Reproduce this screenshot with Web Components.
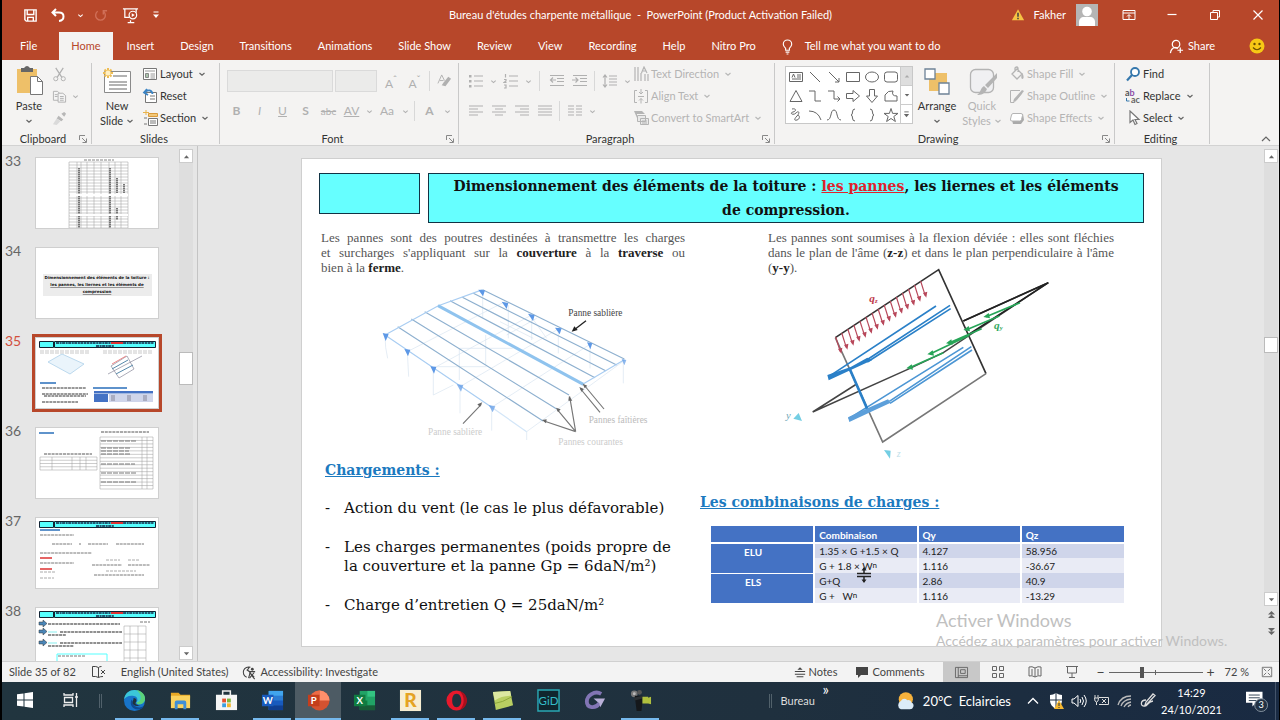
<!DOCTYPE html>
<html lang="en">
<head>
<meta charset="utf-8">
<title>Bureau d'études charpente métallique - PowerPoint</title>
<style>
  html, body { margin: 0; height: 100%; background: #000; }
  body { font: 11px/16px Lato, "Open Sans", sans-serif; color: #333; }
</style>
</head>
<body>
<office-app></office-app>
<script>
const BASE = `
  *{box-sizing:border-box}
  button{font:inherit;color:inherit;background:none;border:0;padding:0;margin:0;display:flex;align-items:center;justify-content:center;white-space:nowrap}
  svg{display:block}
`;

function define(tag, css, html) {
  customElements.define(tag, class extends HTMLElement {
    constructor() { super(); this.attachShadow({ mode: 'open' }); }
    connectedCallback() {
      const body = typeof html === 'function' ? html(this) : html;
      this.shadowRoot.innerHTML = `<style>${BASE}${css}</style>${body}`;
    }
  });
}

/* Each icon: [viewBox width, viewBox height, markup]. Strokes use currentColor. */
const S = 'fill="none" stroke="currentColor"';
const ICONS = {
  save: [16,16,`<path ${S} stroke-width="1.5" d="M2 2h12v12H3.5L2 12.5zM4.5 2v5h7V2M5 14v-4h6v4"/>`],
  undo: [16,16,`<path ${S} stroke-width="2" d="M6 2 2.500 5.500 6 9M3 5.500h6c6 0 6 8 0 8.500"/>`],
  redo: [16,16,`<path ${S} stroke-width="1.500" d="M5 3.500a5.200 5.200 0 1 0 6 0M11 7V3h4"/>`],
  present: [18,18,`<path ${S} stroke-width="1.300" d="M1 2h16M3 2v9h5M15 2v4M9 14v2M6 16.500h7"/><circle cx="11.500" cy="8.500" r="4" ${S} stroke-width="1.300"/><path fill="currentColor" d="m10.300 6.500 3.200 2-3.200 2z"/>`],
  more: [8,8,`<path ${S} d="M1.500 1h5"/><path fill="currentColor" d="M1 3.500h6L4 7z"/>`],
  caret: [8,8,`<path ${S} stroke-width="1.200" d="m1.500 3 2.500 2.200L6.500 3"/>`],
  warn: [16,16,`<path fill="#f6c344" d="M8 1.500 15 14H1z"/><path stroke="#444" stroke-width="1.800" d="M8 5.500v4.500M8 11v1.800"/>`],
  user: [22,22,`<path fill="#b5b5b5" d="M0 0h22v22H0z"/><circle cx="11" cy="7.500" r="4.800" fill="#fff"/><path fill="#fff" d="M3 22v-4c0-3 2-5 5-5h6c3 0 5 2 5 5v4z"/>`],
  ribbonopt: [16,16,`<path ${S} d="M2 3.500h12v9H2zM2 6h12M8 12V8M6 9.500 8 7.500l2 2"/>`],
  min: [16,16,`<path ${S} stroke-width="1.200" d="M3.500 7.500h9"/>`],
  restore: [16,16,`<path ${S} d="M3.500 5.500h7v7h-7zM6 5V3.500h6.500v6.500h-2"/>`],
  close: [16,16,`<path ${S} stroke-width="1.200" d="m3.500 3.500 9 9m0-9-9 9"/>`],
  bulb: [16,18,`<path ${S} stroke-width="1.200" d="M6 13v-2C4.500 9.500 3.500 8.500 3.500 6.500a4.500 4.500 0 0 1 9 0c0 2-1 3-2.500 4.500v2zM6 15h4M7 17h2"/>`],
  share: [16,16,`<circle cx="7.500" cy="5.500" r="4" ${S} stroke-width="1.300"/><path ${S} stroke-width="1.300" d="M1.500 15c.5-3.500 2.500-5.500 5-6l3 1M12 9v6M9 12h6"/>`],
  smile: [16,16,`<circle cx="8" cy="8" r="7.500" fill="#f7c815"/><circle cx="5.500" cy="6" r="1.200" fill="#6b4d00"/><circle cx="10.500" cy="6" r="1.200" fill="#6b4d00"/><path fill="none" stroke="#6b4d00" stroke-width="1.200" d="M4 9.500q4 4.500 8 0"/>`],
  paste: [32,32,`<path fill="#eec069" d="M4 4h20v24H4z"/><path fill="#666" d="M8 7V3h3q3-4 6 0h3v4z"/><path fill="#fff" stroke="#777" d="M17.500 11.500h7l5 5v13h-12z"/><path fill="none" stroke="#777" d="M24.500 11.500v5h5"/>`],
  cut: [16,16,`<path ${S} stroke-width="1.300" d="m4 1 6.500 10M12 1 5.500 11"/><circle cx="4" cy="12.500" r="2.200" ${S}/><circle cx="12" cy="12.500" r="2.200" ${S}/>`],
  copy: [16,16,`<path fill="#f4f4f4" stroke="currentColor" d="M1.500 2.500H6L8.500 5v7h-7zM3 6h3M3 8h3"/><path fill="#f4f4f4" stroke="currentColor" d="M6.500 4.500h5L14.500 7v7h-8zM8.500 8h4M8.500 10h4M8.500 12h4"/>`],
  brush: [16,16,`<path fill="currentColor" d="m10 3 3-2 2 2-2 3zM7 5l5 4-2 2-5-3z" opacity=".9"/><path fill="#dadada" d="m5 8 4 3-4 4-4-1z"/>`],
  launch: [8,8,`<path ${S} d="M.5 5V.5H6M3 3l4 4M7.500 3.500v4h-4"/>`],
  newslide: [32,32,`<path fill="#fff" stroke="#8a8a8a" d="M3.500 6.500h26v21h-26z"/><path stroke="#9a9a9a" stroke-width="1.300" d="M12 11h14M8 17h18M8 20h18M8 24h18"/><path stroke="#eebd55" stroke-width="2" d="M7 3v10M2 8h10M3.500 4.500l7 7M10.500 4.500l-7 7"/><circle cx="7" cy="8" r="2.500" fill="#fff0c4"/>`],
  layout: [16,16,`<path fill="#fff" stroke="#777" d="M1.500 2.500h13v11h-13z"/><path stroke="#999" d="M3 5h10M8.500 8H13M8.500 10H13M8.500 12H13"/><path fill="#aac5ac" stroke="#888" d="M3.500 7.500h3v4h-3z"/>`],
  reset: [16,16,`<path fill="#fff" stroke="#777" d="M3.500 4.500h11v10h-11zM8 8h5M8 11h5"/><path fill="none" stroke="#3b84c4" stroke-width="1.800" d="M5 1 2 4.500 6 7M2.500 4.500C6 1 10 2 10.500 6"/>`],
  section: [16,16,`<path fill="#f2c879" stroke="#d99a3b" d="M6.500 3.500h9v3h-9z"/><path stroke="#e9b34b" d="M1 2.500h6M4 0v5"/><path fill="#fff" stroke="#777" d="M6.500 8.500h9v7h-9zM8 11h6M8 13h6M2 8h3M2 14h3"/>`],
  eraser: [16,16,`<path fill="currentColor" d="m7 9 5-6 3 2-6 8-4-1z"/><path ${S} d="m1 10 4-9 3 6M3 7h4"/>`],
  bullets: [16,16,`<path ${S} stroke-width="1.200" d="M6 3h9M6 8h9M6 13h9"/><path fill="currentColor" d="M1 2h2.500v2.500H1zM1 7h2.500v2.500H1zM1 12h2.500v2.500H1z"/>`],
  numbers: [16,16,`<path ${S} stroke-width="1.200" d="M6 3h9M6 8h9M6 13h9M2.500 1v3.500M1 6.500h2V8L1 9.500h2.500M1 12h2v3H1"/>`],
  outdent: [16,16,`<path ${S} stroke-width="1.200" d="M1 2.500h14M8 5.500h7M8 8.500h7M1 12.500h14M7 7H1.500M4 4.500 1.500 7 4 9.500"/>`],
  indent: [16,16,`<path ${S} stroke-width="1.200" d="M1 2.500h14M8 5.500h7M8 8.500h7M1 12.500h14M0 7h6M3.500 4.500 6 7 3.500 9.500"/>`],
  spacing: [16,16,`<path ${S} stroke-width="1.200" d="M7 3h8M7 6h8M7 9h8M7 12h8M3 2v12M1 4.500 3 2l2 2.500M1 11.500 3 14l2-2.500"/>`],
  left: [16,16,`<path ${S} stroke-width="1.200" d="M1 3h14M1 6h9M1 9h14M1 12h9"/>`],
  center: [16,16,`<path ${S} stroke-width="1.200" d="M1 3h14M4 6h8M1 9h14M4 12h8"/>`],
  right: [16,16,`<path ${S} stroke-width="1.200" d="M1 3h14M6 6h9M1 9h14M6 12h9"/>`],
  justify: [16,16,`<path ${S} stroke-width="1.200" d="M1 3h14M1 6h14M1 9h14M1 12h14"/>`],
  columns: [16,16,`<path ${S} stroke-width="1.200" d="M1 3h6M9 3h6M1 6h6M9 6h6M1 9h6M9 9h6M1 12h6M9 12h6"/>`],
  textdir: [16,16,`<path ${S} stroke-width="1.200" d="M2 1v14M5 1v14M8 7v8M12 8v7M15 8v7M8.500 7 11 1l3 6M10 5h3"/>`],
  aligntext: [16,16,`<path ${S} d="M4 2.500H1.500v12H4M12 2.500h2.500v12H12M5 8.500h6M8 1v5M6 4l2 2 2-2M8 15.500v-5M6 12.500l2-2 2 2"/>`],
  smartart: [16,16,`<path fill="currentColor" d="M1 1h8l3 3H4v4z"/><path fill="#e9e9e9" stroke="currentColor" d="M4.500 5.500h8v6h-8zM7.500 8.500h8v6h-8z"/><path ${S} d="M9 11h5M9 13h5"/>`],
  arrange: [32,32,`<path fill="#eec069" d="M8 8h18v18H8z"/><path fill="#fff" stroke="#6d8297" stroke-width="1.300" d="M4 4h10v10H4zM18 18h10v11H18z"/>`],
  quick: [32,32,`<rect x="4.500" y="4.500" width="23" height="23" rx="5" fill="#f0f0f2" stroke="currentColor" stroke-width="1.300"/><path fill="currentColor" d="M31 8v5l-9 10-3-3zM18 21l3 3c-2 5-6 6-10 6 4-2 3-7 7-9z"/>`],
  fill: [16,16,`<path fill="none" stroke="currentColor" stroke-width="1.300" d="m3 8 5-5 5 5-5 5zM6 5V2q2-2 3 0v4"/><path fill="currentColor" d="M13 7c2 2 2 6 .5 6S12 10 13 7z"/>`],
  outline: [16,16,`<path ${S} d="M11 2.500H1.500v12H5L13 5"/><path fill="currentColor" d="m5 11 8-9 2 1-7 9-4 2z"/>`],
  effects: [16,16,`<path fill="#aaa" d="m3 10 2-4 9-2 1 6-3 4H4z"/><path fill="#fff" stroke="currentColor" d="M4 3.500h8q2 0 1.500 2l-1 4q-.5 1.500-2 1.500H3q-2 0-1.500-2l1-4q.5-1.500 1.500-1.500z"/>`],
  find: [16,16,`<circle cx="10" cy="6" r="4" fill="#fff" stroke="#3678ad" stroke-width="1.800"/><path stroke="#3678ad" stroke-width="2.200" d="M7 9l-5 5.500"/>`],
  replace: [16,16,`<text x="0" y="8" font-size="9" font-family="Lato" font-weight="700" fill="#555">a<tspan fill="#8d4fa8">b</tspan></text><text x="6" y="15" font-size="9" font-family="Lato" font-weight="700" fill="#666">ac</text><path fill="none" stroke="#3678ad" d="M1.500 10v3h3"/>`],
  select: [16,16,`<path fill="#fff" stroke="#777" stroke-width="1.200" d="M5 1v11.500l3-2.500 2 4.500 2-1-2-4h4z"/>`],
  up: [8,8,`<path fill="currentColor" d="M1 6h6L4 2.500z"/>`],
  down: [8,8,`<path fill="currentColor" d="M1 2.500h6L4 6z"/>`],
  uup: [8,10,`<path fill="currentColor" d="M0 5h8L4 1zM0 9h8L4 5z"/>`],
  ddown: [8,10,`<path fill="currentColor" d="M0 1h8L4 5zM0 5h8L4 9z"/>`],
  collapse: [12,8,`<path ${S} stroke-width="1.200" d="m2 6 4-4 4 4"/>`],
  spell: [16,14,`<path ${S} d="M7.500 2.500v10Q5 11 1.500 11.500v-10q3.500-.5 6 1zm0 0q1-1 3-1M7.500 12.500Q9 11.500 12 11.500M10 5l4 4M14 5l-4 4"/>`],
  access: [16,16,`<path ${S} stroke-width="1.200" d="M9 2.500A5.500 5.500 0 1 0 5 13M5 5l3 2h6M9 7l-2 7M9.500 10l4 5M8 2l-2 3"/><circle cx="11" cy="4.500" r="1.500" fill="currentColor"/><path stroke="currentColor" stroke-width="1.200" d="m8 8 5 5m0-5-5 6"/>`],
  notes: [14,14,`<path ${S} stroke-width="1.200" d="M1 6.500h12M1 9.500h12M3 12.500h8"/><path fill="currentColor" d="M4 4.500h6L7 1.500z"/>`],
  comment: [14,14,`<path fill="currentColor" d="M1 2h12v8H6l-3 3v-3H1z"/>`],
  normal: [16,14,`<path ${S} d="M1.500 1.500h13v11h-13zM4.500 1.500v11M7 4h5v4H7zM4.500 10.500h10"/>`],
  sorter: [14,14,`<path ${S} d="M1.500 1.500h4v4h-4zM8.500 1.500h4v4h-4zM1.500 8.500h4v4h-4zM8.500 8.500h4v4h-4z"/>`],
  reading: [14,14,`<path ${S} d="M7 3Q4 1 1 2v9q3-1 6 1zQ10 1 13 2v9q-3-1-6 1M3 5h2M3 7h2M3 9h2M9 5h2M9 7h2M9 9h2"/>`],
  show: [14,14,`<path ${S} d="M1 1.500h12M2.500 2v6h9V2M7 8v4M4 12.500h6"/>`],
  fit: [14,14,`<path ${S} d="M1.500 1.500h11v11h-11zM3 3l3 3M11 3 8 6M3 11l3-3M11 11 8 8"/>`],
  windows: [16,16,`<path fill="#fff" d="m0 2.300 6.500-.9v6.100H0zM7.500 1.200 16 0v7.500H7.500zM0 8.500h6.500v6.100L0 13.700zM7.500 8.500H16V16l-8.500-1.200z"/>`],
  taskview: [16,16,`<path fill="none" stroke="#eee" stroke-width="1.300" d="M1 1v2h9V1M1.500 5.500h8v5h-8zM1 15v-2h9v2M13.500 1v14M12 5h3"/>`],
  edge: [24,24,`<circle cx="12" cy="12" r="11" fill="#1874c9"/><path fill="#3bc6d8" d="M1 11C2 4 7 1 12 1c7 0 11 5 11 9 0 4-3 6-6 6-2 0-3-1-3-2 1-1 1-2 1-3 0-3-3-4-6-4-4 0-7 2-8 4z"/><path fill="#62d46a" d="M14 1c6 1 9 5 9 9 0 4-3 6-6 6-2 0-3-1-3-2 6 0 6-9 0-13z" opacity=".85"/><path fill="#0f4a93" d="M9 11c-3 6 2 12 9 10 2 0 3-2 4-3-6 3-12 0-12-5z"/><path fill="#20323d" d="M11 9.500c2 0 3 1 3 2.500 0 1-1 2-1 3 0 1 3 2 5 2-4 2-8 0-8-3 0-2 1-2 1-4.500z"/>`],
  explorer: [24,24,`<path fill="#e8a925" d="M2 4h8l2 2h10v4H2z"/><path fill="#fbd35e" d="M2 7h20v13H2z"/><path fill="#3f8fd6" d="M6 21v-7q0-2 2-2h8q2 0 2 2v7h-3v-5H9v5z"/>`],
  store: [24,24,`<path fill="none" stroke="#eee" stroke-width="1.600" d="M8 7V2h8v5"/><path fill="#f5f5f5" d="M1 6h22v16H1z"/><path fill="#e5502f" d="M7.500 10h4v4h-4z"/><path fill="#7db53a" d="M12.500 10h4v4h-4z"/><path fill="#3a9ee0" d="M7.500 15h4v4h-4z"/><path fill="#f2b52c" d="M12.500 15h4v4h-4z"/>`],
  word: [24,24,`<path fill="#2b7cd3" d="M8 2h15v20H8z"/><path fill="#41a5ee" d="M8 2h15v5H8z"/><path fill="#185abd" d="M8 12h15v5H8z"/><path fill="#103f91" d="M8 17h15v5H8z"/><path fill="#185abd" d="M1 6h12v12H1z"/><text x="7" y="15.500" font-size="10" font-weight="700" font-family="Lato" text-anchor="middle" fill="#fff">W</text>`],
  ppt: [24,24,`<circle cx="13" cy="12" r="10.500" fill="#d35230"/><path fill="#ff8f6b" d="M13 1.500A10.500 10.500 0 0 1 23.500 12H13z"/><path fill="#ed6c47" d="M13 1.500V12H2.500A10.500 10.500 0 0 1 13 1.500z"/><path fill="#c43e1c" d="M1 6h12v12H1z"/><text x="7" y="15.500" font-size="10" font-weight="700" font-family="Lato" text-anchor="middle" fill="#fff">P</text>`],
  excel: [24,24,`<path fill="#21a366" d="M7 2h16v20H7z"/><path fill="#33c481" d="M15 2h8v6h-8z"/><path fill="#107c41" d="M7 12h8v5H7z"/><path fill="#185c37" d="M7 17h16v5H7z"/><path fill="#107c41" d="M1 6h12v12H1z"/><text x="7" y="15.500" font-size="10" font-weight="700" font-family="Lato" text-anchor="middle" fill="#fff">X</text>`],
  robot: [24,24,`<path fill="#f7edd2" d="M1 1h22v22H1z"/><text x="12" y="19" font-size="20" font-weight="900" font-family="Lato" text-anchor="middle" fill="#e5a323">R</text>`],
  opera: [24,24,`<path fill="#e8192c" fill-rule="evenodd" d="M12 1.500A10.500 10.500 0 1 0 12 22.500 10.500 10.500 0 1 0 12 1.500zm0 3.500c3 0 5 3 5 7s-2 7-5 7-4.500-3-4.500-7 1.500-7 4.500-7z"/><path fill="#a70f1d" d="M15 2c7 2 8 8 8 10s-1 8-8 10c6-5 6-15 0-20z"/>`],
  sticky: [24,24,`<path fill="#b9cf62" d="m2 3 18-1 3 15-18 5z"/><path fill="#dce8a1" d="M2 3l18-1 1 5q-10 0-17 5z"/><path fill="none" stroke="#8ca63a" d="m4 15 8-2 10-5"/>`],
  gid: [24,24,`<path fill="#10262e" stroke="#2aa8b4" stroke-width="1.500" d="M1 1h22v22H1z"/><text x="12" y="17" font-size="12" font-family="Lato" text-anchor="middle" fill="#34bcc8">GiD</text>`],
  gsoft: [24,24,`<path fill="none" stroke="#8275b4" stroke-width="4" d="M19 5C12 1 4 7 4 13c0 7 9 8 13 2"/><path fill="#b9b0d8" d="M11 10h12l-5 9-1-4z"/>`],
  camera: [24,24,`<circle cx="5.500" cy="5" r="3.500" fill="#777"/><circle cx="5.500" cy="5" r="1.500" fill="#bbb"/><circle cx="11" cy="3.500" r="2.500" fill="#555"/><path fill="#15181b" d="M6 7h8v7l-1 9H8z"/><path fill="#2b3033" d="m5 9 9-2v3l-8 2z"/><path fill="#b0c03e" d="M14 8h6v7h-6zM20 9l3-1v8l-3-1z"/>`],
  weather: [24,24,`<circle cx="13" cy="10" r="8.500" fill="#f6b23c"/><path fill="#dcecf8" d="M7 22a5.500 5.500 0 0 1 0-10q3-5 8-1 4-1 5 3 3 1 2 5-1 3-4 3z"/>`],
  chev: [12,12,`<path fill="none" stroke="#fff" stroke-width="1.300" d="m1 8.500 5-5 5 5"/>`],
  shield: [16,16,`<path fill="#fff" d="M8 0q3 2 6 2v5c0 5-3 7-6 9-3-2-6-4-6-9V2q3 0 6-2z"/><path stroke="#1d2d3e" d="M8 0v16M2 7h12"/><path fill="#f4b730" d="m11 7 5 9H6z"/><path stroke="#333" d="M11 10v3M11 14v1"/>`],
  speaker: [16,16,`<path fill="none" stroke="#fff" d="M1 6h2l4-3.500v11L3 10H1zM9 6q1.500 2 0 4M11 4q3 4 0 8M13 2q4.500 6 0 12"/>`],
  battery: [16,16,`<path fill="none" stroke="#ddd" d="M5 4.500h9.500v7H5M1 2v3M4 2v3M.5 5h4q0 4-2 4t-2-4M2.500 9v3M8 6l4 4m0-4-4 4"/>`],
  wifi: [16,16,`<path fill="none" stroke="#bbb" stroke-width="1.300" d="M1 12Q4 3 14 3M4 13q2-6 10-7M7 14q2-4 7-5M11 14q1-2 3-2"/>`],
  pen: [16,16,`<path fill="none" stroke="#ddd" stroke-width="1.300" d="M7 11 5 12l1-3 7-8 2 1.500zM6 7C0 7 0 14 5 13c3 0 2-4 8-5"/>`],
  notif: [26,24,`<path fill="#fff" d="M1 2h18v12h-7l-4 4v-4H1z"/><path stroke="#25384c" d="M4 5.500h12M4 8.500h12M4 11.500h8"/><circle cx="17.500" cy="16.500" r="7" fill="#223244" stroke="#8b98a5"/><text x="17.500" y="20" font-size="10" font-family="Lato" text-anchor="middle" fill="#fff">3</text>`]
};
/* Drawing-gallery shapes on a 16 x 16 field */
const SHAPES = [
  ['Text box','<path d="M1.500 3.500h13v9h-13zM9 6h4M9 8h4M4 10h9M4 8.500 5.500 5 7 8.500"/>'],
  ['Line','<path d="m3 3 10 10"/>'],
  ['Arrow','<path d="m3 3 10 10M13 9v4H9"/>'],
  ['Rectangle','<path d="M1.500 3.500h13v9h-13z"/>'],
  ['Oval','<ellipse cx="8" cy="8" rx="6.500" ry="5"/>'],
  ['Rounded rectangle','<rect x="1.500" y="3" width="13" height="10" rx="2.500"/>'],
  ['Triangle','<path d="M8 2.500 14 13.500H2z"/>'],
  ['Elbow connector','<path d="M2 3h6v10h6"/>'],
  ['Elbow arrow','<path d="M2 3h6v8h6M11.500 8.500 14 11l-2.500 2.500"/>'],
  ['Right arrow','<path d="M1.500 5.500H8v-3L14.500 8 8 13.500v-3H1.500z"/>'],
  ['Down arrow','<path d="M5.500 1.500V8h-3L8 14.500 13.500 8h-3V1.500z"/>'],
  ['Freeform','<path d="M2 13V7q3-5 8-4-2 5 4 5v5z"/>'],
  ['Scribble','<path d="M4 2c4-1 5 2 1 3s0 4 3 1 4 0 1 3-3 5 0 4 3-4 1-5"/>'],
  ['Curve','<path d="M2 4q9 0 12 9"/>'],
  ['S curve','<path d="M1 13C6 13 4 3 8 3s2 10 7 10"/>'],
  ['Left brace','<path d="M10 2Q7.500 2 7.500 5T6 8q1.500 0 1.500 3t2.500 3"/>'],
  ['Right brace','<path d="M6 2q2.500 0 2.500 3T10 8q-1.500 0-1.500 3T6 14"/>'],
  ['Star','<path d="m8 1.500 1.600 4.900H15l-4.200 3.100 1.600 5L8 11.500l-4.400 3 1.600-5L1 6.400h5.400z"/>']
];

define('ui-icon', `:host{display:inline-block;flex:none;line-height:0}`, el => {
  const [w, h, m] = ICONS[el.getAttribute('name')];
  const size = +(el.getAttribute('size') || w);
  return `<svg width="${size}" height="${Math.round(size * h / w)}" viewBox="0 0 ${w} ${h}" aria-hidden="true">${m}</svg>`;
});

define('icon-button', `
  :host{display:block;flex:none}
  button{width:100%;height:100%}
`, el => {
  const icon = el.getAttribute('icon');
  return `<button aria-label="${el.getAttribute('label')}" ${el.hasAttribute('disabled') ? 'disabled' : ''}>${icon ? `<ui-icon name="${icon}" ${el.hasAttribute('size') ? `size="${el.getAttribute('size')}"` : ''}></ui-icon>` : ''}<slot></slot></button>`;
});

define('title-bar', `
  :host{display:grid;grid-template-columns:1fr auto 1fr;align-items:center;height:32px;background:#b7472a;color:#fff;padding-bottom:2px}
  .quick,.win{display:flex;align-items:center}
  .quick{padding-left:14px}
  .quick icon-button{width:28px;height:24px}
  .quick .slim{width:16px}
  .quick .wide{width:36px}
  .quick .dim{width:24px;color:#d06f58}
  .win{justify-content:flex-end}
  .win icon-button{width:43px;height:24px}
  .win ui-icon{margin-right:9px}
  .win .name{margin-right:10px}
`, `
  <div class="quick">
    <icon-button icon="save" size="15" label="Save"></icon-button>
    <icon-button icon="undo" size="16" label="Undo"></icon-button>
    <icon-button class="slim" icon="caret" size="7" label="Undo list"></icon-button>
    <icon-button class="dim" icon="redo" size="15" label="Redo" disabled></icon-button>
    <icon-button class="wide" icon="present" size="17" label="Start from beginning"></icon-button>
    <icon-button class="slim" icon="more" size="8" label="Customize toolbar"></icon-button>
  </div>
  <div>Bureau d'études charpente métallique &nbsp;- &nbsp;PowerPoint (Product Activation Failed)</div>
  <div class="win">
    <ui-icon name="warn" size="14"></ui-icon><span class="name">Fakher</span><ui-icon name="user" size="22"></ui-icon>
    <icon-button icon="ribbonopt" size="16" label="Ribbon display options"></icon-button>
    <icon-button icon="min" label="Minimize"></icon-button>
    <icon-button icon="restore" label="Restore"></icon-button>
    <icon-button icon="close" label="Close"></icon-button>
  </div>
`);

define('ribbon-tabs', `
  :host{display:flex;align-items:stretch;height:28px;background:#b7472a;color:#fff}
  nav{display:flex;gap:2px;padding-left:6px}
  button{padding:0 12px}
  nav button:first-child{margin-right:8px}
  .on{background:#f4f3f2;color:#b7472a}
  .tell{gap:10px;padding:0 12px}
  .share{margin-left:auto;gap:4px;padding:0 12px}
  .mood{padding:0 14px 0 22px}
`, `
  <nav>${['File','Home','Insert','Design','Transitions','Animations','Slide Show','Review','View','Recording','Help','Nitro Pro'].map(t => `<button class="${t === 'Home' ? 'on' : ''}">${t}</button>`).join('')}</nav>
  <button class="tell"><ui-icon name="bulb" size="15"></ui-icon>Tell me what you want to do</button>
  <button class="share"><ui-icon name="share" size="15"></ui-icon>Share</button>
  <button class="mood" aria-label="Feedback"><ui-icon name="smile" size="16"></ui-icon></button>
`);

define('ribbon-group', `
  :host{display:flex;flex-direction:column;flex:none;height:81px;border-right:1px solid #c9c9c9}
  .body{height:70px;display:flex}
  .foot{display:flex;line-height:11px;padding-right:3px}
  .foot span{flex:1;text-align:center}
  .foot button{width:10px;color:#888}
`, el => `<div class="body"><slot></slot></div><div class="foot"><span>${el.getAttribute('label')}</span>${el.hasAttribute('plain') ? '' : `<button aria-label="${el.getAttribute('label')} settings"><ui-icon name="launch" size="8"></ui-icon></button>`}</div>`);

define('ribbon-button', `
  :host{display:block;flex:none}
  button{height:22px;gap:2px;color:#333}
  .caret{width:8px;margin-left:3px;color:#666;display:inline-flex}
  button:disabled{color:#b4b4b4}
  button:disabled .caret{color:#b9b9b9}
  :host([big]) button{width:100%;height:66px;flex-direction:column;justify-content:flex-start;gap:1px;line-height:15px;padding-top:2px}
  :host([big]) .caret{display:inline-block;margin:0}
  :host([big]) .lab{white-space:pre-line;text-align:center}
`, el => {
  const caret = el.hasAttribute('caret') ? `<span class="caret"><ui-icon name="caret" size="8"></ui-icon></span>` : '';
  const big = el.hasAttribute('big');
  return `<button ${el.hasAttribute('disabled') ? 'disabled' : ''}><ui-icon name="${el.getAttribute('icon')}" size="${big ? 32 : 16}"></ui-icon>${big ? `<span class="lab"><slot></slot> ${caret}</span>` : `<span><slot></slot></span>${caret}`}</button>`;
});

define('shape-gallery', `
  :host{display:flex;width:128px;height:58px;margin-top:3px;background:#fff;border:1px solid #c8c8c8}
  .grid{display:grid;grid-template-columns:repeat(6,19px);grid-auto-rows:19px;flex:1}
  .grid button{color:#666}
  .bar{display:flex;flex-direction:column;width:12px;border-left:1px solid #ccc;color:#666}
  .bar button{flex:1}
  .bar button:first-child{background:#dedede;color:#aaa}
  .bar button+button{border-top:1px solid #ccc}
`, `
  <div class="grid">${SHAPES.map(([n, p]) => `<button aria-label="${n}"><svg width="16" height="16" viewBox="0 0 16 16" fill="none" stroke="currentColor">${p}</svg></button>`).join('')}</div>
  <div class="bar"><button aria-label="Previous shapes"><ui-icon name="up" size="6"></ui-icon></button><button aria-label="Next shapes"><ui-icon name="down" size="6"></ui-icon></button><button aria-label="More shapes"><ui-icon name="more" size="7"></ui-icon></button></div>
`);

define('office-ribbon', `
  :host{display:flex;height:86px;background:#f4f3f2;border-bottom:1px solid #d2d2d2;padding-top:3px}
  .col{display:flex;flex-direction:column}
  .row{display:flex;align-items:center;height:30px}
  .off{color:#b0b0b0}
  .clip{width:90px;padding-left:6px}
  .slides{width:128px}
  .font{width:239px}
  .para{width:316px}
  .draw{width:340px}
  .edit{width:95px}
  .tiny{width:32px}
  .tiny icon-button{height:22px;width:18px}
  .tiny div{display:flex}
  .tiny .c{width:14px}
  .fontbox{padding:3px 0 0 7px}
  select{appearance:none;height:22px;border:1px solid #d0d0d0;background:#e8e8e7;margin:0 2px 0 0;border-radius:0}
  .fam{width:106px}.siz{width:42px}
  .fontbox icon-button,.pbox icon-button{width:23px;height:24px}
  .fontbox .row:last-child{margin-left:-2px}
  .fontbox .c,.pbox .c{width:12px}
  .fontbox .w{width:24px}
  i.sep{width:1px;height:20px;background:#d8d8d8;margin:0 5px}
  i.sep.s{margin:0 3px}
  .pbox{padding:3px 0 0 5px;width:174px}
  .quick{width:42px}.arr{width:48px}.big{width:50px}.pst{width:42px}
  .fx{padding-left:6px}
  .edit .col{padding-left:10px}
  shape-gallery{margin-left:10px}
  .collapse{margin-left:auto;display:flex;align-items:flex-end;padding:0 7px 2px 0;color:#666}
  b,em,u,s,span{font-size:12px}
  s{font-size:10px}
`, `
  <ribbon-group class="clip" label="Clipboard">
    <ribbon-button class="pst" big icon="paste" caret>Paste
</ribbon-button>
    <div class="col tiny off">
      <div><icon-button icon="cut" size="15" label="Cut" disabled></icon-button></div>
      <div><icon-button icon="copy" size="15" label="Copy" disabled></icon-button><icon-button class="c" icon="caret" size="7" label="Copy options" disabled></icon-button></div>
      <div><icon-button icon="brush" size="15" label="Format painter" disabled></icon-button></div>
    </div>
  </ribbon-group>
  <ribbon-group class="slides" label="Slides" plain>
    <ribbon-button class="big" big icon="newslide" caret>New
Slide</ribbon-button>
    <div class="col"><ribbon-button icon="layout" caret>Layout</ribbon-button><ribbon-button icon="reset">Reset</ribbon-button><ribbon-button icon="section" caret>Section</ribbon-button></div>
  </ribbon-group>
  <ribbon-group class="font" label="Font">
    <div class="col fontbox off">
      <div class="row"><select class="fam" aria-label="Font name" disabled></select><select class="siz" aria-label="Font size" disabled></select>
        <icon-button label="Increase font size" class="w" disabled><span>A<sup>ˆ</sup></span></icon-button><icon-button label="Decrease font size" disabled><span>A<sup>ˇ</sup></span></icon-button><i class="sep s"></i><icon-button icon="eraser" size="15" label="Clear formatting" disabled></icon-button></div>
      <div class="row"><icon-button label="Bold" disabled><b>B</b></icon-button><icon-button label="Italic" disabled><em>I</em></icon-button><icon-button label="Underline" disabled><u>U</u></icon-button><icon-button label="Shadow" disabled><b>S</b></icon-button><icon-button label="Strikethrough" disabled><s>abc</s></icon-button><icon-button label="Character spacing" disabled><u>AV</u></icon-button><icon-button class="c" icon="caret" size="7" label="Spacing options" disabled></icon-button><icon-button class="w" label="Change case" disabled><span>Aa</span></icon-button><icon-button class="c" icon="caret" size="7" label="Case options" disabled></icon-button><i class="sep s"></i><icon-button label="Font color" disabled><b>A</b></icon-button><icon-button class="c" icon="caret" size="7" label="Font color options" disabled></icon-button></div>
    </div>
  </ribbon-group>
  <ribbon-group class="para" label="Paragraph">
    <div class="col pbox off">
      <div class="row"><icon-button icon="bullets" label="Bullets" disabled></icon-button><icon-button class="c" icon="caret" size="7" label="Bullet options" disabled></icon-button><icon-button icon="numbers" label="Numbering" disabled></icon-button><icon-button class="c" icon="caret" size="7" label="Numbering options" disabled></icon-button><i class="sep"></i><icon-button icon="outdent" label="Decrease indent" disabled></icon-button><icon-button icon="indent" label="Increase indent" disabled></icon-button><i class="sep s"></i><icon-button icon="spacing" label="Line spacing" disabled></icon-button><icon-button class="c" icon="caret" size="7" label="Line spacing options" disabled></icon-button></div>
      <div class="row"><icon-button icon="left" label="Align left" disabled></icon-button><icon-button icon="center" label="Center" disabled></icon-button><icon-button icon="right" label="Align right" disabled></icon-button><icon-button icon="justify" label="Justify" disabled></icon-button><i class="sep s"></i><icon-button icon="columns" label="Columns" disabled></icon-button><icon-button class="c" icon="caret" size="7" label="Column options" disabled></icon-button></div>
    </div>
    <div class="col"><ribbon-button icon="textdir" caret disabled>Text Direction</ribbon-button><ribbon-button icon="aligntext" caret disabled>Align Text</ribbon-button><ribbon-button icon="smartart" caret disabled>Convert to SmartArt</ribbon-button></div>
  </ribbon-group>
  <ribbon-group class="draw" label="Drawing">
    <shape-gallery></shape-gallery>
    <ribbon-button class="arr" big icon="arrange" caret>Arrange
</ribbon-button>
    <ribbon-button class="quick" big icon="quick" caret disabled>Quick
Styles</ribbon-button>
    <div class="col fx"><ribbon-button icon="fill" caret disabled>Shape Fill</ribbon-button><ribbon-button icon="outline" caret disabled>Shape Outline</ribbon-button><ribbon-button icon="effects" caret disabled>Shape Effects</ribbon-button></div>
  </ribbon-group>
  <ribbon-group class="edit" label="Editing" plain>
    <div class="col"><ribbon-button icon="find">Find</ribbon-button><ribbon-button icon="replace" caret>Replace</ribbon-button><ribbon-button icon="select" caret>Select</ribbon-button></div>
  </ribbon-group>
  <div class="collapse"><button aria-label="Collapse the ribbon"><ui-icon name="collapse" size="12"></ui-icon></button></div>
`);

/* Miniature drawings shown in the thumbnail list, on a 122 x 70 field */
const HEAD = `<path fill="#5ff" stroke="#123" d="M3.500 3.500h14v6h-14zM18.500 3.500h101v6h-101z"/><path stroke="#124" stroke-width="1.500" stroke-dasharray="3 .6 2 .5" d="M20 5h98M60 8h18"/><path stroke="#d33" stroke-width="2" d="M75 5h12"/>`;
const grid = (x, y, w, h, cols, rows) => {
  let d = `M${x} ${y}h${w}v${h}h-${w}z`;
  cols.forEach(c => d += `M${x + c} ${y}v${h}`);
  for (let r = 1; r < rows; r++) d += `M${x} ${y + r * h / rows}h${w}`;
  return `<path fill="none" stroke="#999" stroke-width=".5" d="${d}"/>`;
};
const THUMBS = {
  33: `<path stroke="#666" stroke-width=".8" stroke-dasharray="3 1" d="M48 2h30"/>${grid(33,4,59,66,[8,12,18,25,32,40,46,52],22)}<path stroke="#777" stroke-width="2" stroke-dasharray="1.500 .5" d="M43 10v60M74 10v60"/><path stroke="#777" stroke-width="2" stroke-dasharray="1.500 .5" d="M81 20v15M81 50v12M88 26v9"/><path stroke="#fff" stroke-width="2" d="M34 37h58M34 57h58"/>`,
  34: `<path fill="#ececec" d="M7 26h109v22H7z"/><g font-family="DejaVu Sans" font-weight="700" font-size="4" text-anchor="middle" fill="#111"><text x="61" y="31">Dimensionnement des éléments de la toiture :</text><text x="61" y="38" text-decoration="underline">les pannes, les liernes et les éléments de</text><text x="61" y="45" text-decoration="underline">compression</text></g>`,
  35: `${HEAD}<path stroke="#bbb" stroke-width=".8" stroke-dasharray="4 1" d="M4 13h50M4 15h50M67 13h49M67 15h49"/><path stroke="#bcd9ee" fill="#eaf4fb" d="m12 24 14-8 22 10-14 10z"/><path stroke="#889" fill="none" stroke-width=".7" d="m75 28 16-10 7 13-15 9zM72 36l34-18"/><path stroke="#58a" stroke-width="1" d="m76 31 16-9M80 36l17-9"/><path stroke="#e88" d="m76 26 14-8"/><path stroke="#2a6fba" stroke-width="1.300" d="M4 45h16M57 50h34"/><path stroke="#333" stroke-dasharray="3 .7" d="M6 50h44M6 56h46M8 58h42M6 64h36"/><path fill="#4472c4" d="M58 53h59v2.500H58zM58 56h14v8H58z"/><path fill="#cfd5ea" d="M73 56h44v8H73z"/><path stroke="#667" stroke-width=".7" stroke-dasharray="4 12" d="M75 58h42M75 60h42M75 62h42"/>`,
  36: `<path stroke="#2a6fba" stroke-width="1.500" d="M3 5h15"/><path stroke="#555" stroke-dasharray="3 .8" d="M8 26h48M65 4h48"/>${grid(4,29,57,13,[12,32,40,46],4)}${grid(64,9,53,52,[42,47],15)}<path stroke="#777" stroke-dasharray="5 1" d="M65 13h36M65 20h30M65 23h28M65 26h30M65 36h34M65 45h35M65 54h36"/>`,
  37: `${HEAD}<path stroke="#2a6fba" stroke-width="1.500" d="M4 12h20"/><path stroke="#555" stroke-width=".8" stroke-dasharray="3 .7" d="M4 17h34M4 35h52M16 26h20M43 26h2M52 26h20M80 26h28M4 45h34M56 47h30M92 47h22M58 57h50"/><path stroke="#d33" stroke-width="1.500" d="M4 40h12M4 51h12"/><path stroke="#aaa" stroke-dasharray="3 1" d="M70 42h14M92 42h12M4 60h14M70 53h30M4 54h16"/>`,
  38: `${HEAD}<path fill="#4a86b8" stroke="#333" stroke-width=".5" d="M3 14h4v-2l4 3.500-4 3.500v-2H3zM3 22h4v-2l4 3.500-4 3.500v-2H3zM3 33h4v-2l4 3.500-4 3.500v-2H3z"/><path stroke="#222" stroke-width="1.200" stroke-dasharray="3 .7" d="M12 16h72M24 24h62M12 27h18M24 35h62M12 38h26"/><path stroke="#8ee" stroke-width="1.200" d="M12 24h9M12 35h9"/><path fill="#fff" stroke="#5ff" d="M21 46h50v24H21z"/><path stroke="#777" stroke-dasharray="3 1" d="M22 48h28M104 14h10"/>${grid(88,18,22,40,[6,14],5)}`
};

define('slide-thumb', `
  :host{display:flex;gap:14px;height:90px;flex:none;font-size:14px;color:#666}
  .n{width:16px;line-height:16px}
  button{width:124px;height:72px;margin-top:4px;background:#fff;border:1px solid #cfcfcf}
  :host([current]){color:#d24f3c}
  :host([current]) button{outline:3px solid #b7472a}
`, el => {
  const n = el.getAttribute('number');
  return `<span class="n">${n}</span><button aria-label="Slide ${n}"><svg width="122" height="70" viewBox="0 0 122 70" fill="none">${THUMBS[n]}</svg></button>`;
});

define('scroll-bar', `
  :host{display:flex;flex-direction:column;width:14px;background:#dedede;color:#666}
  button{width:14px;height:14px;background:#fff;border:1px solid #ccc;flex:none}
  .above,.below{flex:1 1 0}
  .thumb{background:#fff;border:1px solid #bbb;flex:none}
  .pages{display:flex;flex-direction:column;flex:none;background:#e6e6e6}
  .pages button{background:none;border:0;height:17px}
`, el => `
  <button aria-label="Scroll up"><ui-icon name="up" size="7"></ui-icon></button>
  <div class="above" style="flex-grow:${el.getAttribute('before')}"></div><div class="thumb" style="height:${el.getAttribute('thumb')}px"></div><div class="below" style="flex-grow:${el.getAttribute('after')}"></div>
  <button aria-label="Scroll down"><ui-icon name="down" size="7"></ui-icon></button>
  ${el.hasAttribute('pages') ? '<div class="pages"><button aria-label="Previous slide"><ui-icon name="uup" size="7"></ui-icon></button><button aria-label="Next slide"><ui-icon name="ddown" size="7"></ui-icon></button></div>' : ''}
`);

define('thumb-pane', `
  :host{display:flex;width:196px;flex:none;min-height:0;background:#e6e6e6;border-right:1px solid #c4c4c4}
  .list{flex:1;min-height:0;overflow:hidden;padding:7px 0 0 3px;display:flex;flex-direction:column}
  scroll-bar{margin:3px 4px 1px 0}
`, `
  <div class="list">${[33,34,35,36,37,38].map(n => `<slide-thumb number="${n}" ${n === 35 ? 'current' : ''}></slide-thumb>`).join('')}</div>
  <scroll-bar before="190" thumb="33" after="262"></scroll-bar>
`);

/* Roof frame: purlins, rafters and columns */
define('roof-diagram', `:host{display:block;width:300px}svg{width:100%;height:auto}`, `
<svg viewBox="240 360 900 540" fill="none" role="img" aria-label="Panne sablière">
  <g stroke="#d8e4f0" stroke-width="2">
    <path d="M322 590 615 440M400 640 695 480M480 695 775 522M575 757 870 568M680 830 975 615"/>
    <path d="M255 540q0 40 8 70M322 590l4 75M400 640v80M480 695v80M575 757v70M680 830v25M548 410v80M625 450v100M695 485v70M775 525v70M870 570v70M970 620v65M478 580v95M557 540v90M478 580h160M400 635h160M600 500l100 50M690 480l50 70M620 540l90-50M400 720l60-30"/>
  </g>
  <g stroke="#8eb0cf" stroke-width="3.500">
    <path d="m548 404 425 208M520 415l430 215M487 427l430 220M450 437l435 231M374 470l433 250M334 492l436 270M293 515l436 283"/>
    <path stroke="#a9cdf2" d="m255 540 320 217M255 540l160-88 133-48M848 688l125-74"/>
    <path stroke="#d3e6f8" d="m575 757 105 73"/>
  </g>
  <path stroke="#8fc3ee" stroke-width="9" d="m414 452 436 236"/>
  <g fill="#5d98e6"><path d="m535 404 20 2-6 18zM605 440l20 4-5 18zM684 476l20 4-5 18zM765 518l20 2-6 18zM861 562l16 3-6 18zM248 534l18 4-9 20zM313 582l18 2-7 20zM391 634l18 2-7 20z"/><path opacity=".7" d="m470 688 20 2-7 20zM566 750l20 4-8 18zM965 612l14 3-6 16z"/></g>
  <g stroke="#777" stroke-width="3.500"><path d="m489 806 55-58M827 830l-18-105M827 830l-55-66M827 830l-95-32M900 772l-58-70M912 762l-60-72"/></g>
  <g fill="#666"><path d="m547 742-7 14-8-8zM807 722l10 15h-12zM768 758l14 5-8 9zM726 795l14-2-2 12zM838 696l14 6-8 8zM848 686l14 6-8 8z"/></g>
  <path stroke="#222" stroke-width="4" d="m858 497-36 28"/><path fill="#222" d="m815 530 8-16 10 11z"/>
  <g font-family="Liberation Serif" font-size="28"><text x="805" y="484" fill="#444">Panne sablière</text><text x="384" y="841" fill="#ccc">Panne sablière</text><text x="866" y="803" fill="#bbb">Pannes faîtières</text><text x="775" y="869" fill="#ccc">Pannes courantes</text></g>
</svg>`);

/* Loads q z and q y on an inclined purlin */
const ARROWS = Array.from({ length: 15 }, (_, i) => {
  const x = 317 + i * 18.2, y = 543 - i * 12;
  return `<path d="m${x} ${y} 14 44"/><path fill="#b8475a" stroke="none" d="m${x + 17} ${y + 50}-10-14 13-4z"/>`;
}).join('');
define('load-diagram', `:host{display:block;width:300px}svg{width:100%;height:auto}`, `
<svg viewBox="108 333 900 600" fill="none" role="img" aria-label="Charges qz et qy">
  <path stroke="#333" stroke-width="5" d="m316 545 310-204 142 312"/>
  <path stroke="#777" stroke-width="5" d="M768 653 458 858 316 545"/>
  <path stroke="#444" stroke-width="4.500" d="M248 768 540 637 640 590 955 380 700 495M248 768l132-84"/>
  <path stroke="#222" stroke-width="5" d="M715 536 955 380 700 495"/>
  <g stroke="#b8475a" stroke-width="3.500">${ARROWS}</g>
  <g stroke="#2a80c8" stroke-width="5"><path d="m296 662 322-212M410 612l250-164M412 618l250-160"/><path stroke="#4c96d4" d="m356 788 344-214M478 736l246-164M480 742l246-160"/><path stroke-width="8" d="m358 636 56 128"/></g>
  <path fill="#2a80c8" d="m292 657 70-24 50-28 14 8-62 28-68 32z"/><path fill="#5c9fda" d="m354 784 60-28 60-26 8 10-60 28-64 30z"/>
  <g stroke="#27a558" stroke-width="5"><path d="M870 440 768 482M808 480l-100 42M755 518l-100 44M718 538l-118 56M640 590l-103 46"/></g>
  <g fill="#27a558"><path d="m760 483 16-12 4 16zM700 522l16-12 4 16zM648 562l16-12 4 16zM592 595l16-12 4 16zM529 637l16-12 4 16z"/></g>
  <path fill="#51c2dc" d="m190 788 16-17 10 24zM462 882l20 2-2 24z" opacity=".8"/>
  <g font-family="Liberation Serif" font-style="italic" font-weight="700"><text x="418" y="437" font-size="34" fill="#c0394b">q<tspan font-size="20" dy="5">z</tspan></text><text x="792" y="518" font-size="34" fill="#35a862">q<tspan font-size="20" dy="5">y</tspan></text><text x="168" y="788" font-size="32" font-weight="400" fill="#6fa8b8">y</text><text x="500" y="904" font-size="30" font-weight="400" fill="#bfe0ea">z</text></g>
</svg>`);

define('load-table', `
  :host{display:block}
  table{border-collapse:collapse;width:100%;table-layout:fixed;font:10px/14px Lato,sans-serif;color:#222;background:#fff}
  th,td{text-align:left;padding:0 4px;height:15px;border:0;border-right:2px solid #fff;white-space:pre}
  tr>:last-child{border-right:0}
  thead th{background:#4472c4;color:#fff;border-bottom:2px solid #fff;padding-top:2px}
  tbody th{background:#4472c4;color:#fff;text-align:center;vertical-align:top;padding-right:22px;padding-top:1px}
  tbody tr:nth-child(odd) td{background:#cfd5ea}
  tbody tr:nth-child(even) td{background:#e9ebf5}
  tbody tr:nth-child(3) th{border-top:1px solid #fff}
  small{font-size:8px;line-height:8px;vertical-align:2px}
`, `
<table>
  <thead><tr><th scope="col"></th><th scope="col">Combinaison</th><th scope="col">Qy</th><th scope="col">Qz</th></tr></thead>
  <tbody>
    <tr><th scope="rowgroup" rowspan="2">ELU</th><td>1.35 × G +1.5 × Q</td><td>4.127</td><td>58.956</td></tr>
    <tr><td>G + 1.8 × W<small>n</small></td><td>1.116</td><td>-36.67</td></tr>
    <tr><th scope="rowgroup" rowspan="2">ELS</th><td>G+Q</td><td>2.86</td><td>40.9</td></tr>
    <tr><td>G +   W<small>n</small></td><td>1.116</td><td>-13.29</td></tr>
  </tbody>
</table>`);

define('slide-canvas', `
  :host{display:block;position:relative;background:#fff;border:1px solid #cfcfcf;aspect-ratio:860/488;padding:14px 17px;font-family:"DejaVu Serif",serif;color:#111}
  header{display:flex;align-items:flex-start;gap:8px}
  .tag{width:101px;height:41px;background:#6ff;border:1px solid #134}
  h1{flex:1;margin:0;background:#6ff;border:1px solid #134;font-size:14px;line-height:24px;font-weight:700;text-align:center}
  h1 u{color:#e0222c}
  .cols{display:grid;grid-template-columns:381px 1fr;margin-top:7px}
  p{font:13px/15px "Liberation Serif",serif;text-align:justify;margin:0;color:#555}
  p span{display:block;text-align-last:justify}
  p b{color:#222}
  .left p{width:364px;margin-left:2px}
  .right p{width:346px;margin-left:68px}
  roof-diagram{margin-left:61px}
  load-diagram{margin:-8px 0 0 66px}
  h2{margin:0;font-size:14px;line-height:20px;color:#1c7abf;text-decoration:underline}
  .left h2{margin:5px 0 0 6px}
  .right h2{margin-top:25px}
  ul{list-style:none;margin:19px 0 0 6px;padding:0;font-size:15px;line-height:19px;display:grid;gap:20px;white-space:nowrap}
  li{display:flex;gap:14px}
  load-table{margin:14px 20px 0 11px}
  .pointer{position:absolute;left:554px;top:408px}
`, `
  <header><div class="tag"></div><h1>Dimensionnement des éléments de la toiture : <u>les pannes</u>, les liernes et les éléments<br>de compression.</h1></header>
  <div class="cols">
    <section class="left">
      <p><span>Les pannes sont des poutres destinées à transmettre les charges</span><span>et surcharges s'appliquant sur la <b>couverture</b> à la <b>traverse</b> ou</span>bien à la <b>ferme</b>.</p>
      <roof-diagram></roof-diagram>
      <h2>Chargements :</h2>
      <ul><li><span>-</span><span>Action du vent (le cas le plus défavorable)</span></li><li><span>-</span><span>Les charges permanentes (poids propre de<br>la couverture et la panne Gp = 6daN/m²)</span></li><li><span>-</span><span>Charge d’entretien Q = 25daN/m²</span></li></ul>
    </section>
    <section class="right">
      <p>Les pannes sont soumises à la flexion déviée : elles sont fléchies dans le plan de l'âme (<b>z-z</b>) et dans le plan perpendiculaire à l'âme (<b>y-y</b>).</p>
      <load-diagram></load-diagram>
      <h2>Les combinaisons de charges :</h2>
      <load-table></load-table>
    </section>
  </div>
  <svg class="pointer" width="16" height="16" viewBox="0 0 16 16"><path stroke="#222" stroke-width="1.500" d="M1 6.500h14M1 9.500h14M8 1v5M8 10v5"/><path fill="#222" d="M5.500 3.500h5L8 0zM5.500 12.500h5L8 16z"/></svg>
`);

define('work-area', `
  :host{display:flex;flex:1;min-width:0;min-height:0;background:#e6e6e6;position:relative}
  .stage{flex:1;min-width:0;padding:12px 102px 0 103px;overflow:hidden}
  scroll-bar{margin:3px 1px 21px 0}
  .mark{position:absolute;right:49px;bottom:10px;width:294px;color:#c0c0c0;font-size:14px;line-height:20px;white-space:nowrap}
  .mark strong{display:block;font-weight:400;font-size:18px;line-height:22px}
`, `
  <div class="stage"><slide-canvas></slide-canvas></div>
  <scroll-bar before="174" thumb="16" after="240" pages></scroll-bar>
  <div class="mark"><strong>Activer Windows</strong>Accédez aux paramètres pour activer Windows.</div>
`);

define('status-bar', `
  :host{display:flex;align-items:center;height:21px;flex:none;background:#f3f3f3;border-top:1px solid #d0d0d0;padding:0 4px 0 7px;color:#444}
  button{height:20px;gap:3px}
  .sp{margin:0 14px 0 15px}
  .acc{margin-left:14px}
  .end{margin-left:auto;display:flex;align-items:center}
  .end .cm{margin:0 18px}
  .end icon-button{width:37px;height:20px;color:#666}
  .end .on{background:#c8c8c8}
  .end .z{width:16px;font-size:14px}
  input{appearance:none;width:94px;height:20px;margin:0;background:linear-gradient(#666,#666) center/100% 1px no-repeat,linear-gradient(#666,#666) center/1px 5px no-repeat}
  input::-webkit-slider-thumb{appearance:none;width:4px;height:11px;background:#555}
  .views{display:flex;margin-right:2px}
  .pct{margin:0 2px 0 6px}
  .end .fit{width:24px;margin-left:4px;margin-right:-4px}
`, `
  <span>Slide 35 of 82</span>
  <icon-button class="sp" icon="spell" size="16" label="Spelling"></icon-button>
  <button>English (United States)</button>
  <button class="acc"><ui-icon name="access" size="15"></ui-icon>Accessibility: Investigate</button>
  <div class="end">
    <button><ui-icon name="notes" size="12"></ui-icon>Notes</button>
    <button class="cm"><ui-icon name="comment" size="14"></ui-icon>Comments</button>
    <div class="views"><icon-button class="on" icon="normal" size="15" label="Normal view"></icon-button>
    <icon-button icon="sorter" label="Slide sorter"></icon-button>
    <icon-button icon="reading" label="Reading view"></icon-button>
    <icon-button icon="show" label="Slide show"></icon-button></div>
    <button class="z">−</button><input type="range" min="10" max="178" value="68" aria-label="Zoom"><button class="z">+</button>
    <span class="pct">72 %</span>
    <icon-button class="fit" icon="fit" size="12" label="Fit slide"></icon-button>
  </div>
`);

define('task-item', `
  :host{display:block;width:46px;height:38px;flex:none}
  button{width:100%;height:100%;border-bottom:2px solid transparent}
  :host([open]){padding:0 4px}
  :host([open]) button{border-color:#76b9ed}
  :host([active]){padding:0}
  :host([active]) button{background:#4d5b64}
`, el => `<button aria-label="${el.getAttribute('label')}"><ui-icon name="${el.getAttribute('icon')}" size="${el.getAttribute('size') || 23}"></ui-icon></button>`);

define('task-bar', `
  :host{display:flex;align-items:center;height:38px;flex:none;background:linear-gradient(90deg,#21353f,#1f303e 60%,#192a42);color:#fff}
  i{width:3px;height:14px;border:solid #51616b;border-width:0 1px;margin:0 9px 0 5px}
  .tray{margin-left:auto;display:flex;align-items:center}
  .desk{position:relative;margin-right:80px;color:#ddd}
  .desk span{position:absolute;left:42px;top:-12px;font-size:15px;color:#fff}
  .w{font-size:13px;gap:8px}
  .clock{flex-direction:column;line-height:17px;margin:0 22px 0 2px}
  .tray .ic{width:23px;height:30px}
  .tray .first{margin-left:10px}
  .tray .n{width:26px;height:30px}
  .edge{width:1px;height:38px;background:#44546a;margin:0 3px 0 5px}
`, `
  <task-item icon="windows" label="Start" size="16"></task-item>
  <task-item icon="taskview" label="Task view" size="16"></task-item>
  <i></i>
  ${[['edge','Edge',1],['explorer','File Explorer',1],['store','Store',0],['word','Word',1],['ppt','PowerPoint',2],['excel','Excel',0],['robot','Robot',1],['opera','Opera',1],['sticky','Notes',1],['gid','GiD',0],['gsoft','Graph',0],['camera','Recorder',1]].map(([ic, l, o]) => `<task-item icon="${ic}" label="${l}" ${o ? 'open' : ''} ${o === 2 ? 'active' : ''}></task-item>`).join('')}
  <div class="tray">
    <i></i>
    <button class="desk">Bureau<span>»</span></button>
    <button class="w"><ui-icon name="weather" size="20"></ui-icon>20°C &nbsp;Eclaircies</button>
    <icon-button class="ic first" icon="chev" size="12" label="Hidden icons"></icon-button>
    ${['shield','speaker','battery','wifi','pen'].map(n => `<icon-button class="ic" icon="${n}" size="16" label="${n}"></icon-button>`).join('')}
    <button class="clock"><span>14:29</span><span>24/10/2021</span></button>
    <icon-button class="n" icon="notif" size="24" label="Notifications"></icon-button>
    <div class="edge"></div>
  </div>
`);

define('office-app', `
  :host{box-sizing:border-box;display:flex;flex-direction:column;height:100vh;border:solid #000;border-width:0 1px 0 2px;overflow:hidden}
  main{display:flex;flex:1;min-height:0}
  title-bar,ribbon-tabs,office-ribbon{flex:none}
`, `
  <title-bar></title-bar><ribbon-tabs></ribbon-tabs><office-ribbon></office-ribbon>
  <main><thumb-pane></thumb-pane><work-area></work-area></main>
  <status-bar></status-bar><task-bar></task-bar>
`);
</script>
</body>
</html>
